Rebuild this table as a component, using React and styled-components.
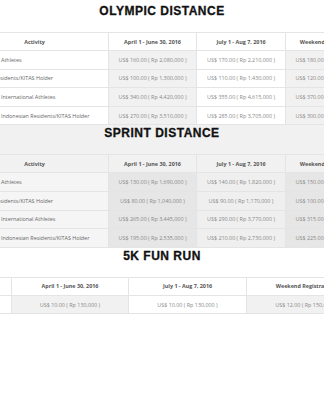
import React from "react";
import styled, { createGlobalStyle } from "styled-components";

const GlobalStyle = createGlobalStyle`
  html, body {
    margin: 0;
    padding: 0;
    background: #ffffff;
    overflow: hidden;
  }
  body {
    font-family: "Open Sans", "Liberation Sans", sans-serif;
  }
`;

const head = ["Activity", "April 1 - June 30, 2016", "July 1 - Aug 7, 2016", "Weekend Registration"];

const olympic = {
  title: "OLYMPIC DISTANCE",
  widths: [148, 88, 89, 88],
  indent: 40,
  rows: [
    ["Athletes", "US$ 160.00 ( Rp 2,080,000 )", "US$ 170.00 ( Rp 2,210,000 )", "US$ 180.00 ( Rp 2,340,000 )"],
    ["Residents/KITAS Holder", "US$ 100.00 ( Rp 1,300,000 )", "US$ 110.00 ( Rp 1,430,000 )", "US$ 120.00 ( Rp 1,560,000 )"],
    ["International Athletes", "US$ 340.00 ( Rp 4,420,000 )", "US$ 355.00 ( Rp 4,615,000 )", "US$ 370.00 ( Rp 4,810,000 )"],
    ["Indonesian Residents/KITAS Holder", "US$ 270.00 ( Rp 3,510,000 )", "US$ 285.00 ( Rp 3,705,000 )", "US$ 300.00 ( Rp 3,900,000 )"],
  ],
  shifts: [0, 7, 0, 0],
};

const sprint = {
  title: "SPRINT DISTANCE",
  widths: [148, 88, 89, 88],
  indent: 40,
  rows: [
    ["Athletes", "US$ 130.00 ( Rp 1,690,000 )", "US$ 140.00 ( Rp 1,820,000 )", "US$ 150.00 ( Rp 1,950,000 )"],
    ["Residents/KITAS Holder", "US$ 80.00 ( Rp 1,040,000 )", "US$ 90.00 ( Rp 1,170,000 )", "US$ 100.00 ( Rp 1,300,000 )"],
    ["International Athletes", "US$ 265.00 ( Rp 3,445,000 )", "US$ 290.00 ( Rp 3,770,000 )", "US$ 315.00 ( Rp 4,095,000 )"],
    ["Indonesian Residents/KITAS Holder", "US$ 195.00 ( Rp 2,535,000 )", "US$ 210.00 ( Rp 2,730,000 )", "US$ 225.00 ( Rp 2,925,000 )"],
  ],
  shifts: [0, 7, 0, 0],
};

// first column of the fun run table sits off screen, its label is not visible
const funRun = {
  title: "5K FUN RUN",
  widths: [51, 117, 118, 118],
  indent: 4,
  rows: [["5K", "US$ 10.00 ( Rp 130,000 )", "US$ 10.00 ( Rp 130,000 )", "US$ 12.00 ( Rp 150,000 )"]],
  shifts: [0],
};

function PriceTable({ data, tinted }) {
  return (
    <Section $tinted={tinted}>
      <Title>{data.title}</Title>
      <TableWrap>
        <Table>
          <colgroup>
            {data.widths.map((w, i) => (
              <col key={i} style={{ width: w }} />
            ))}
          </colgroup>
          <thead>
            <tr>
              {head.map((h, i) => (
                <HeadCell key={i}>{h}</HeadCell>
              ))}
            </tr>
          </thead>
          <tbody>
            {data.rows.map((row, r) => (
              <tr key={r}>
                {row.map((cell, c) =>
                  c === 0 ? (
                    <NameCell key={c} $tinted={tinted} $indent={data.indent}>
                      <NameText $shift={data.shifts[r]}>{cell}</NameText>
                    </NameCell>
                  ) : (
                    <PriceCell key={c} $tinted={tinted} $odd={c % 2 === 1}>
                      {cell}
                    </PriceCell>
                  )
                )}
              </tr>
            ))}
          </tbody>
        </Table>
      </TableWrap>
    </Section>
  );
}

export default function App() {
  return (
    <>
      <GlobalStyle />
      <Page>
        <PriceTable data={olympic} />
        <PriceTable data={sprint} tinted />
        <PriceTable data={funRun} />
      </Page>
    </>
  );
}

const Page = styled.div`
  width: 324px;
  padding-top: 3px;
`;

const Section = styled.section`
  background: ${(p) => (p.$tinted ? "#f1f1f1" : "#ffffff")};
  padding-top: 1px;
`;

const Title = styled.h2`
  margin: 0 0 14px;
  font-family: "Liberation Sans", Arial, sans-serif;
  font-weight: 700;
  font-size: 12px;
  line-height: 14px;
  letter-spacing: 0.5px;
  text-align: center;
  color: #111111;
  -webkit-text-stroke: 0.3px #111111;
`;

const TableWrap = styled.div`
  width: 324px;
  overflow: hidden;
`;

const Table = styled.table`
  margin-left: -40px;
  border-collapse: collapse;
  table-layout: fixed;
  width: max-content;
  font-family: "Open Sans", "Liberation Sans", sans-serif;
`;

const HeadCell = styled.th`
  height: 17px;
  padding: 0 4px;
  border: 1px solid #e4e4e4;
  font-size: 5.4px;
  font-weight: 700;
  color: #555555;
  text-align: center;
  white-space: nowrap;
  overflow: hidden;
`;

const NameCell = styled.td`
  height: 17.6px;
  padding: 0 0 0 ${(p) => p.$indent}px;
  border: 1px solid #e4e4e4;
  background: ${(p) => (p.$tinted ? "#f5f5f5" : "#ffffff")};
  white-space: nowrap;
  overflow: hidden;
`;

const NameText = styled.span`
  display: block;
  margin-left: ${(p) => -p.$shift}px;
  font-size: 5.4px;
  color: #666666;
`;

const PriceCell = styled.td`
  height: 17.6px;
  padding: 0 4px;
  border: 1px solid #e4e4e4;
  background: ${(p) =>
    p.$tinted
      ? p.$odd
        ? "#e6e6e6"
        : "#efefef"
      : p.$odd
      ? "#f1f1f1"
      : "#ffffff"};
  font-size: 5.4px;
  color: #888888;
  text-align: center;
  white-space: nowrap;
  overflow: hidden;
`;
